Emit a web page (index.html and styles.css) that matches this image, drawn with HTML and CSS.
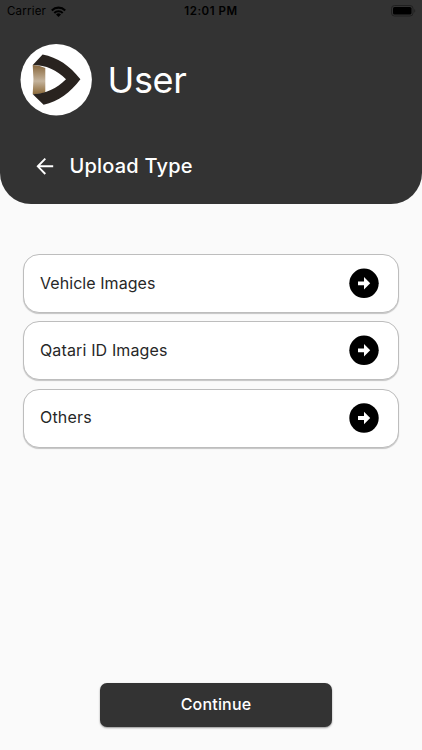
FILE: index.html
```html
<!DOCTYPE html>
<html lang="en">
<head>
<meta charset="utf-8">
<title>Upload Type</title>
<link rel="stylesheet" href="styles.css">
</head>
<body>
<div class="screen">
  <header class="header">
    <div class="status">
      <div class="carrier"><span>Carrier</span>
        <svg class="wifi" viewBox="0 0 15 11"><g fill="none" stroke="#000" stroke-width="2.1"><path d="M.8 4.4a9.5 9.5 0 0 1 13.4 0"/><path d="M3.3 7a6 6 0 0 1 8.4 0"/></g><path d="M5 8.5a3.6 3.6 0 0 1 5 0L7.5 11z"/></svg>
      </div>
      <span class="time">12:01 PM</span>
      <svg class="battery" viewBox="0 0 25 12"><rect x=".5" y=".5" width="21.5" height="10.5" rx="3" fill="none" stroke="#202020"/><rect x="2" y="2" width="18.5" height="7.5" rx="1.6"/><path d="M23.3 4v3.8c1.3-.5 1.3-3.3 0-3.8z" fill="#202020"/></svg>
    </div>
    <div class="profile">
      <svg class="logo" viewBox="20 44 72 72">
        <defs><linearGradient id="gold" x1="0" y1="0" x2="0" y2="1"><stop offset="0" stop-color="#87673d"/><stop offset=".3" stop-color="#aa9170"/><stop offset=".55" stop-color="#c5b49d"/><stop offset=".8" stop-color="#a58a64"/><stop offset="1" stop-color="#8d6b3b"/></linearGradient></defs>
        <circle cx="56.2" cy="79.8" r="35.7" fill="#fff"/>
        <path d="M32.7 65Q39 65.2 45.3 68V92.4Q39 94.2 32.7 94.2Q34.2 79 32.7 65z" fill="url(#gold)"/>
        <path d="M42.6 54.5C57.5 57.5 69.8 65.5 80.4 79.3C70.5 92.5 58.5 101.5 43.6 104.8L32.8 94.2C45.5 94 56.8 88.5 66 79.3C57 70.2 46 65 32.8 65z" fill="#29231f"/>
      </svg>
      <h1>User</h1>
    </div>
    <div class="heading">
      <svg class="back" viewBox="0 0 18 18"><path d="M17.2 9.3H1.8M9.3 1.6L1.8 9.3L9.3 17" fill="none" stroke="#fff" stroke-width="1.9"/></svg>
      <h2>Upload Type</h2>
    </div>
  </header>
  <main class="list">
    <div class="card"><span class="label vehicle">Vehicle Images</span><svg class="go" viewBox="0 0 30 30"><circle cx="15" cy="15.3" r="14.7"/><path d="M9 13.4h6V9.1l6.2 6.2l-6.2 6.2v-4.3H9z" fill="#fff"/></svg></div>
    <div class="card"><span class="label qatari">Qatari ID Images</span><svg class="go" viewBox="0 0 30 30"><circle cx="15" cy="15.3" r="14.7"/><path d="M9 13.4h6V9.1l6.2 6.2l-6.2 6.2v-4.3H9z" fill="#fff"/></svg></div>
    <div class="card"><span class="label others">Others</span><svg class="go" viewBox="0 0 30 30"><circle cx="15" cy="15" r="14.7"/><path d="M9 13.1h6V8.8l6.2 6.2l-6.2 6.2v-4.3H9z" fill="#fff"/></svg></div>
  </main>
  <button class="continue">Continue</button>
</div>
</body>
</html>
```
FILE: styles.css
```css
* { box-sizing: border-box; }
body { margin: 0; background: #fafafa; font-family: Inter, sans-serif; }
svg { display: block; flex: none; }
h1, h2 { margin: 0; color: #fff; }
.screen { width: 422px; height: 750px; display: flex; flex-direction: column; overflow: hidden; }
.header { height: 204px; flex: none; background: #333; border-radius: 0 0 31px 31px; }
.status { height: 22px; display: grid; grid-template-columns: 1fr auto 1fr; align-items: center; padding: 0 6px 0 7px; font-size: 11.5px; line-height: 22px; color: #000; }
.carrier { display: flex; align-items: center; gap: 5px; letter-spacing: .2px; }
.wifi { width: 15px; height: 11px; }
.time { font-weight: 600; letter-spacing: .55px; margin-left: -1px; }
.battery { width: 25px; height: 12px; justify-self: end; }
.profile { display: flex; align-items: center; height: 72px; margin-top: 22px; padding-left: 20px; }
.logo { width: 72px; height: 72px; }
h1 { margin-left: 15.5px; font-size: 36px; line-height: 44px; font-weight: 400; letter-spacing: -.35px; }
.heading { display: flex; align-items: center; height: 28px; margin-top: 36px; padding-left: 36px; }
.back { width: 18px; height: 18px; }
h2 { margin-left: 15.5px; font-size: 20px; line-height: 28px; font-weight: 500; letter-spacing: .2px; }
.list { display: flex; flex-direction: column; gap: 8.3px; padding: 50px 23px 0; }
.card { height: 59px; display: flex; align-items: center; justify-content: space-between; padding: 0 19px 1px 16px; background: #fff; border: 1px solid #bdbdbd; border-radius: 16px; box-shadow: 0 1px 1px rgba(0, 0, 0, .22); color: #272727; font-size: 16px; letter-spacing: .2px; }
.label { padding-bottom: 1px; }
.vehicle { letter-spacing: .06px; }
.qatari { letter-spacing: .14px; }
.go { width: 30px; height: 30px; }
.continue { width: 232px; height: 44px; margin: auto 0 23px 100px; flex: none; border: 0; border-radius: 7px; background: #333; color: #fff; font: 500 16px/43px Inter, sans-serif; letter-spacing: .2px; padding: 0 0 1px; box-shadow: 0 1px 2px rgba(0, 0, 0, .4); }
```
